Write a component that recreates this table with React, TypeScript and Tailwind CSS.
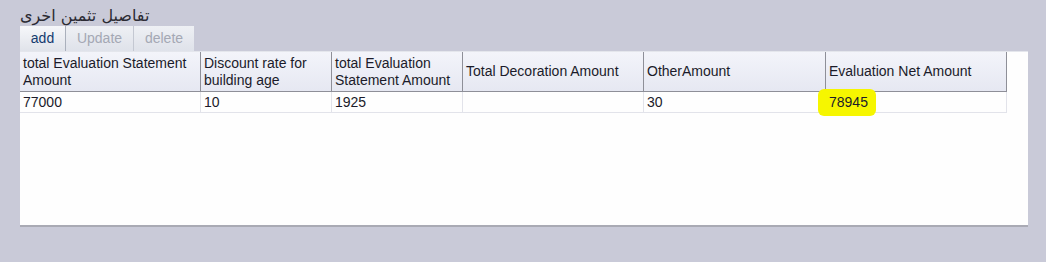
import React from "react";

const columns = [
  { title: "total Evaluation Statement Amount", w: "w-[181px]" },
  { title: "Discount rate for building age", w: "w-[131px]" },
  { title: "total Evaluation Statement Amount", w: "w-[131px]" },
  { title: "Total Decoration Amount", w: "w-[181px]" },
  { title: "OtherAmount", w: "w-[182px]" },
  { title: "Evaluation Net Amount", w: "w-[181px]" },
];

const row = ["77000", "10", "1925", "", "30", "78945"];

export default function App() {
  return (
    <div
      className="h-[262px] w-[1046px] bg-[#c9cad8] pl-[20px] pt-[6px] text-[14px] text-[#1b1b2a]"
      style={{ fontFamily: '"Liberation Sans", Arial, sans-serif' }}
    >
      <div
        dir="rtl"
        className="h-[20px] w-fit whitespace-nowrap text-[16px] leading-[20px] text-[#2b2b33]"
        style={{ fontFamily: '"DejaVu Sans", "Noto Sans", sans-serif' }}
      >
        تفاصيل تثمين اخرى
      </div>

      <div className="flex h-[25px] items-stretch">
        <button className="w-[46px] border-r border-[#aab0bc] bg-gradient-to-b from-[#f6f7fa] to-[#e0e3ea] text-[14px] text-[#143b6e]">
          add
        </button>
        <button className="w-[68px] border-r border-[#c4c8d2] bg-gradient-to-b from-[#eef0f4] to-[#dfe2ea] text-[14px] text-[#a4a8b4]">
          Update
        </button>
        <button className="w-[60px] bg-gradient-to-b from-[#eef0f4] to-[#dfe2ea] text-[14px] text-[#a4a8b4]">
          delete
        </button>
      </div>

      <div className="h-[176px] w-[1008px] border-t border-[#e4e6ec] border-b-2 border-b-[#a9aab4] bg-[#fefefe]">
        <div className="flex h-[40px] w-[987px] border-b border-[#8e8f98] bg-gradient-to-b from-[#f3f4fa] to-[#e6e8f2]">
          {columns.map((c, i) => (
            <div
              key={i}
              className={`${c.w} flex items-center border-r border-[#8e8f98] px-[3px] leading-[17px]`}
            >
              {c.title}
            </div>
          ))}
        </div>
        <div className="flex h-[21px] w-[987px] border-b border-[#e2e3ea]">
          {row.map((v, i) => (
            <div
              key={i}
              className={`${columns[i].w} relative flex items-center border-r border-[#e2e3ea] px-[3px]`}
            >
              {i === 5 && (
                <span className="absolute left-[-8px] top-[-3px] h-[27px] w-[58px] rounded-[6px] bg-[#f6f600]" />
              )}
              <span className="relative">{v}</span>
            </div>
          ))}
        </div>
      </div>
    </div>
  );
}
